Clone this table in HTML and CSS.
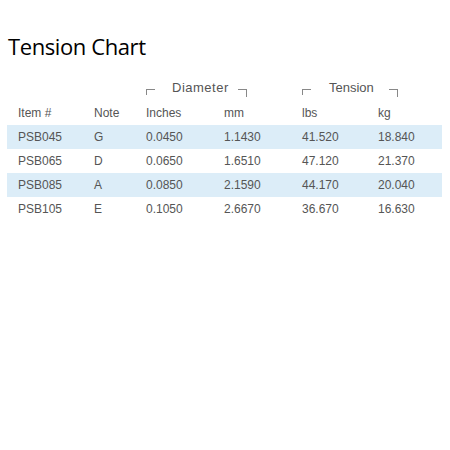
FILE: index.html
```
<!DOCTYPE html>
<html>
<head>
<meta charset="utf-8">
<link rel="stylesheet" href="styles.css">
</head>
<body>
<h1 class="title">Tension Chart</h1>
<table class="chart">
  <colgroup>
    <col class="c-item"><col class="c-note"><col class="c-in"><col class="c-mm"><col class="c-lbs"><col class="c-kg">
  </colgroup>
  <thead>
    <tr class="group-row">
      <th></th><th></th>
      <th colspan="2"><span class="group group-dia"><span class="br br-l"></span><span class="group-label">Diameter</span><span class="br br-r"></span></span></th>
      <th colspan="2"><span class="group group-ten"><span class="br br-l"></span><span class="group-label">Tension</span><span class="br br-r"></span></span></th>
    </tr>
    <tr class="head-row">
      <th>Item #</th><th>Note</th><th>Inches</th><th>mm</th><th>lbs</th><th>kg</th>
    </tr>
  </thead>
  <tbody>
    <tr class="alt"><td>PSB045</td><td>G</td><td>0.0450</td><td>1.1430</td><td>41.520</td><td>18.840</td></tr>
    <tr><td>PSB065</td><td>D</td><td>0.0650</td><td>1.6510</td><td>47.120</td><td>21.370</td></tr>
    <tr class="alt"><td>PSB085</td><td>A</td><td>0.0850</td><td>2.1590</td><td>44.170</td><td>20.040</td></tr>
    <tr><td>PSB105</td><td>E</td><td>0.1050</td><td>2.6670</td><td>36.670</td><td>16.630</td></tr>
  </tbody>
</table>
</body>
</html>
```
FILE: styles.css
```
body {
  margin: 0;
  background: #fff;
  font-family: "Liberation Sans", Arial, sans-serif;
  color: #555;
}
.title {
  margin: 0;
  padding: 31px 0 0 8px;
  font-family: "Open Sans", sans-serif;
  font-weight: normal;
  font-size: 22px;
  line-height: 30px;
  letter-spacing: -0.4px;
  color: #000;
}
.chart {
  margin: 16px 0 0 7px;
  width: 435px;
  border-collapse: collapse;
  table-layout: fixed;
  font-size: 12px;
}
.c-item { width: 76px; }
.c-note { width: 52px; }
.c-in { width: 78px; }
.c-mm { width: 78px; }
.c-lbs { width: 76px; }
.c-kg { width: 75px; }
.chart th, .chart td {
  padding: 0 0 0 11px;
  height: 24px;
  text-align: left;
  font-weight: normal;
  white-space: nowrap;
}
.group-row th {
  vertical-align: top;
  padding-top: 3px;
  height: 21px;
}
.alt td { background: #dcedf8; }
.group {
  display: inline-flex;
  align-items: flex-start;
}
.group-label {
  color: #555;
  font-size: 13px;
  line-height: 15px;
}
.br {
  display: inline-block;
  width: 8px;
  height: 5px;
  border-top: 1px solid #888;
  margin-top: 9px;
}
.br-l { border-left: 1px solid #888; }
.br-r { border-right: 1px solid #888; height: 7px; }
.group-dia .group-label { margin: 0 9px 0 17px; letter-spacing: 0.5px; }
.group-ten .group-label { margin: 0 15px 0 18px; }
```
